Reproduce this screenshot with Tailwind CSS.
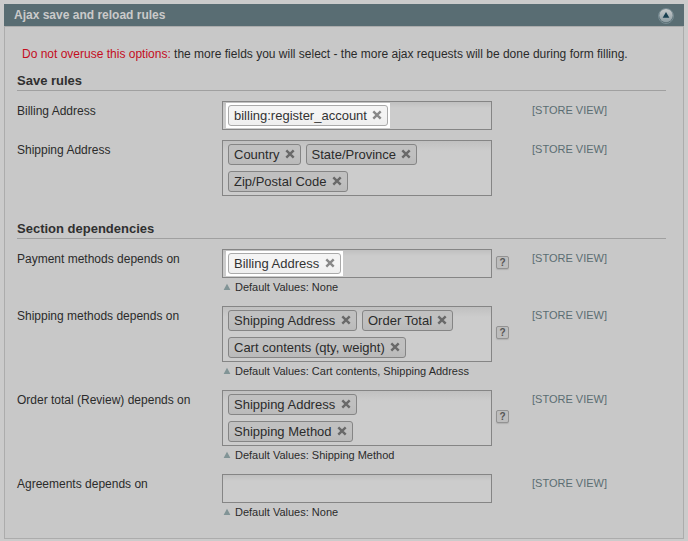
<!DOCTYPE html>
<html lang="en">
<head>
<meta charset="utf-8">
<title>Ajax save and reload rules</title>
<script src="https://cdn.jsdelivr.net/npm/@tailwindcss/browser@4"></script>
</head>
<body class="w-[688px] h-[541px] overflow-hidden bg-[#cbcbcb] p-1 font-['Liberation_Sans',Arial,sans-serif] text-[12px] leading-4 text-[#2b2b2b]">
<svg class="hidden">
  <symbol id="x" viewBox="0 0 10 10"><path d="M1.3 1.3 8.7 8.7M8.7 1.3 1.3 8.7" stroke="currentColor" stroke-width="2.4" fill="none"/></symbol>
  <symbol id="tri" viewBox="0 0 8 8"><path d="M4 .8 7.4 7H.6Z" fill="#819496"/></symbol>
</svg>
<section class="w-[680px]">
  <header class="flex h-[22px] items-center justify-between bg-[#596d73] pl-[10px] pr-[10px]">
    <h1 class="font-bold text-[#cacaca]">Ajax save and reload rules</h1>
    <svg class="mt-px size-4" viewBox="0 0 16 16">
      <defs><linearGradient id="g" x2="0" y2="1"><stop stop-color="#c8cbcc"/><stop offset="1" stop-color="#8d9da3"/></linearGradient></defs>
      <circle cx="8" cy="8" r="7.5" fill="#596d73" stroke="#7b9096" stroke-width=".9"/>
      <circle cx="8" cy="7.6" r="6.7" fill="url(#g)"/>
      <path d="M8 4 11.3 9.8H4.7Z" fill="#173f50"/>
    </svg>
  </header>
  <div class="h-[513px] border border-[#acacac] bg-[#c8c8c8] pl-3 pr-[17px] pt-[19px]">
    <p class="pl-[5px]"><span class="text-[#c40d1e]">Do not overuse this options:</span> the more fields you will select - the more ajax requests will be done during form filling.</p>
    <h2 class="mt-[9px] h-5 border-b border-[#a0a0a0] text-[13px] leading-5 font-bold text-[#303030]">Save rules</h2>

    <div class="mt-[10px] grid h-[39px] grid-cols-[205px_310px_1fr] items-start">
      <div class="pt-[2px]">Billing Address</div>
      <div class="flex h-[29px] w-[270px] border border-[#858585] bg-linear-to-b from-[#c0c0c0] to-[#cccccc] to-[6px] p-[1px_3px]">
        <div class="h-[25px] bg-white p-[2px]">
          <span class="flex h-[21px] items-center rounded-[3px] border border-[#aaaaaa] bg-linear-to-b from-[#f4f4f4] from-50% to-[#eeeeee] px-[5px] text-[13px] text-[#333]">billing:register_account<svg class="mb-px ml-[5px] size-[10px] text-[#888]"><use href="#x"/></svg></span>
        </div>
      </div>
      <div class="pt-[1px] text-[11px] text-[#5b6d72]">[STORE VIEW]</div>
    </div>

    <div class="grid h-[78px] grid-cols-[205px_310px_1fr] items-start">
      <div class="pt-[2px]">Shipping Address</div>
      <div class="flex h-[56px] w-[270px] flex-wrap content-start gap-x-[5px] gap-y-[6px] border border-[#858585] bg-linear-to-b from-[#c0c0c0] to-[#cccccc] to-[10px] pt-[3px] pl-[5px]">
        <span class="flex h-[21px] items-center rounded-[3px] border border-[#858585] bg-linear-to-b from-[#c0c0c0] from-50% to-[#bababa] px-[5px] text-[13px]">Country<svg class="mb-px ml-[5px] size-[10px] text-[#696969]"><use href="#x"/></svg></span>
        <span class="flex h-[21px] items-center rounded-[3px] border border-[#858585] bg-linear-to-b from-[#c0c0c0] from-50% to-[#bababa] px-[5px] text-[13px]">State/Province<svg class="mb-px ml-[5px] size-[10px] text-[#696969]"><use href="#x"/></svg></span>
        <span class="flex h-[21px] items-center rounded-[3px] border border-[#858585] bg-linear-to-b from-[#c0c0c0] from-50% to-[#bababa] px-[5px] text-[13px]">Zip/Postal Code<svg class="mb-px ml-[5px] size-[10px] text-[#696969]"><use href="#x"/></svg></span>
      </div>
      <div class="pt-[1px] text-[11px] text-[#5b6d72]">[STORE VIEW]</div>
    </div>

    <h2 class="mt-px h-5 border-b border-[#a0a0a0] text-[13px] leading-5 font-bold text-[#303030]">Section dependencies</h2>

    <div class="mt-[10px] grid h-[57px] grid-cols-[205px_310px_1fr] items-start">
      <div class="pt-[2px]">Payment methods depends on</div>
      <div>
        <div class="flex items-center gap-1">
          <div class="flex h-[29px] w-[270px] border border-[#858585] bg-linear-to-b from-[#c0c0c0] to-[#cccccc] to-[6px] p-[1px_3px]">
            <div class="h-[25px] bg-white p-[2px]">
              <span class="flex h-[21px] w-[113px] items-center justify-between rounded-[3px] border border-[#aaaaaa] bg-linear-to-b from-[#f4f4f4] from-50% to-[#eeeeee] px-[5px] text-[13px] whitespace-nowrap text-[#333]">Billing Address<svg class="mb-px size-[10px] shrink-0 text-[#888]"><use href="#x"/></svg></span>
            </div>
          </div>
          <span class="mt-[-2px] flex h-[13px] w-[13px] items-center justify-center rounded-[2px] border border-[#929292] bg-[#bdbdbd] text-[10px] font-bold text-[#555] shadow-[0_1px_1px_#b0b0b0]">?</span>
        </div>
        <p class="mt-[2px] flex items-center gap-1 text-[11px] leading-[15px]"><svg class="mb-px ml-px size-2"><use href="#tri"/></svg>Default Values: None</p>
      </div>
      <div class="pt-[1px] text-[11px] text-[#5b6d72]">[STORE VIEW]</div>
    </div>

    <div class="grid h-[84px] grid-cols-[205px_310px_1fr] items-start">
      <div class="pt-[2px]">Shipping methods depends on</div>
      <div>
        <div class="flex items-center gap-1">
          <div class="flex h-[56px] w-[270px] flex-wrap content-start gap-x-[5px] gap-y-[6px] border border-[#858585] bg-linear-to-b from-[#c0c0c0] to-[#cccccc] to-[10px] pt-[3px] pl-[5px]">
            <span class="flex h-[21px] w-[129px] items-center justify-between rounded-[3px] border border-[#858585] bg-linear-to-b from-[#c0c0c0] from-50% to-[#bababa] px-[5px] text-[13px] whitespace-nowrap">Shipping Address<svg class="mb-px size-[10px] shrink-0 text-[#696969]"><use href="#x"/></svg></span>
            <span class="flex h-[21px] items-center rounded-[3px] border border-[#858585] bg-linear-to-b from-[#c0c0c0] from-50% to-[#bababa] px-[5px] text-[13px]">Order Total<svg class="mb-px ml-[5px] size-[10px] text-[#696969]"><use href="#x"/></svg></span>
            <span class="flex h-[21px] items-center rounded-[3px] border border-[#858585] bg-linear-to-b from-[#c0c0c0] from-50% to-[#bababa] px-[5px] text-[13px]">Cart contents (qty, weight)<svg class="mb-px ml-[5px] size-[10px] text-[#696969]"><use href="#x"/></svg></span>
          </div>
          <span class="mt-[-3px] flex h-[13px] w-[13px] items-center justify-center rounded-[2px] border border-[#929292] bg-[#bdbdbd] text-[10px] font-bold text-[#555] shadow-[0_1px_1px_#b0b0b0]">?</span>
        </div>
        <p class="mt-[2px] flex items-center gap-1 text-[11px] leading-[15px]"><svg class="mb-px ml-px size-2"><use href="#tri"/></svg>Default Values: Cart contents, Shipping Address</p>
      </div>
      <div class="pt-[1px] text-[11px] text-[#5b6d72]">[STORE VIEW]</div>
    </div>

    <div class="grid h-[84px] grid-cols-[205px_310px_1fr] items-start">
      <div class="pt-[2px]">Order total (Review) depends on</div>
      <div>
        <div class="flex items-center gap-1">
          <div class="flex h-[56px] w-[270px] flex-col items-start gap-y-[6px] border border-[#858585] bg-linear-to-b from-[#c0c0c0] to-[#cccccc] to-[10px] pt-[3px] pl-[5px]">
            <span class="flex h-[21px] w-[129px] items-center justify-between rounded-[3px] border border-[#858585] bg-linear-to-b from-[#c0c0c0] from-50% to-[#bababa] px-[5px] text-[13px] whitespace-nowrap">Shipping Address<svg class="mb-px size-[10px] shrink-0 text-[#696969]"><use href="#x"/></svg></span>
            <span class="flex h-[21px] items-center rounded-[3px] border border-[#858585] bg-linear-to-b from-[#c0c0c0] from-50% to-[#bababa] px-[5px] text-[13px]">Shipping Method<svg class="mb-px ml-[5px] size-[10px] text-[#696969]"><use href="#x"/></svg></span>
          </div>
          <span class="mt-[-3px] flex h-[13px] w-[13px] items-center justify-center rounded-[2px] border border-[#929292] bg-[#bdbdbd] text-[10px] font-bold text-[#555] shadow-[0_1px_1px_#b0b0b0]">?</span>
        </div>
        <p class="mt-[2px] flex items-center gap-1 text-[11px] leading-[15px]"><svg class="mb-px ml-px size-2"><use href="#tri"/></svg>Default Values: Shipping Method</p>
      </div>
      <div class="pt-[1px] text-[11px] text-[#5b6d72]">[STORE VIEW]</div>
    </div>

    <div class="grid grid-cols-[205px_310px_1fr] items-start">
      <div class="pt-[2px]">Agreements depends on</div>
      <div>
        <div class="h-[29px] w-[270px] border border-[#858585] bg-linear-to-b from-[#c0c0c0] to-[#cccccc] to-[6px]"></div>
        <p class="mt-[2px] flex items-center gap-1 text-[11px] leading-[15px]"><svg class="mb-px ml-px size-2"><use href="#tri"/></svg>Default Values: None</p>
      </div>
      <div class="pt-[1px] text-[11px] text-[#5b6d72]">[STORE VIEW]</div>
    </div>
  </div>
</section>
</body>
</html>
